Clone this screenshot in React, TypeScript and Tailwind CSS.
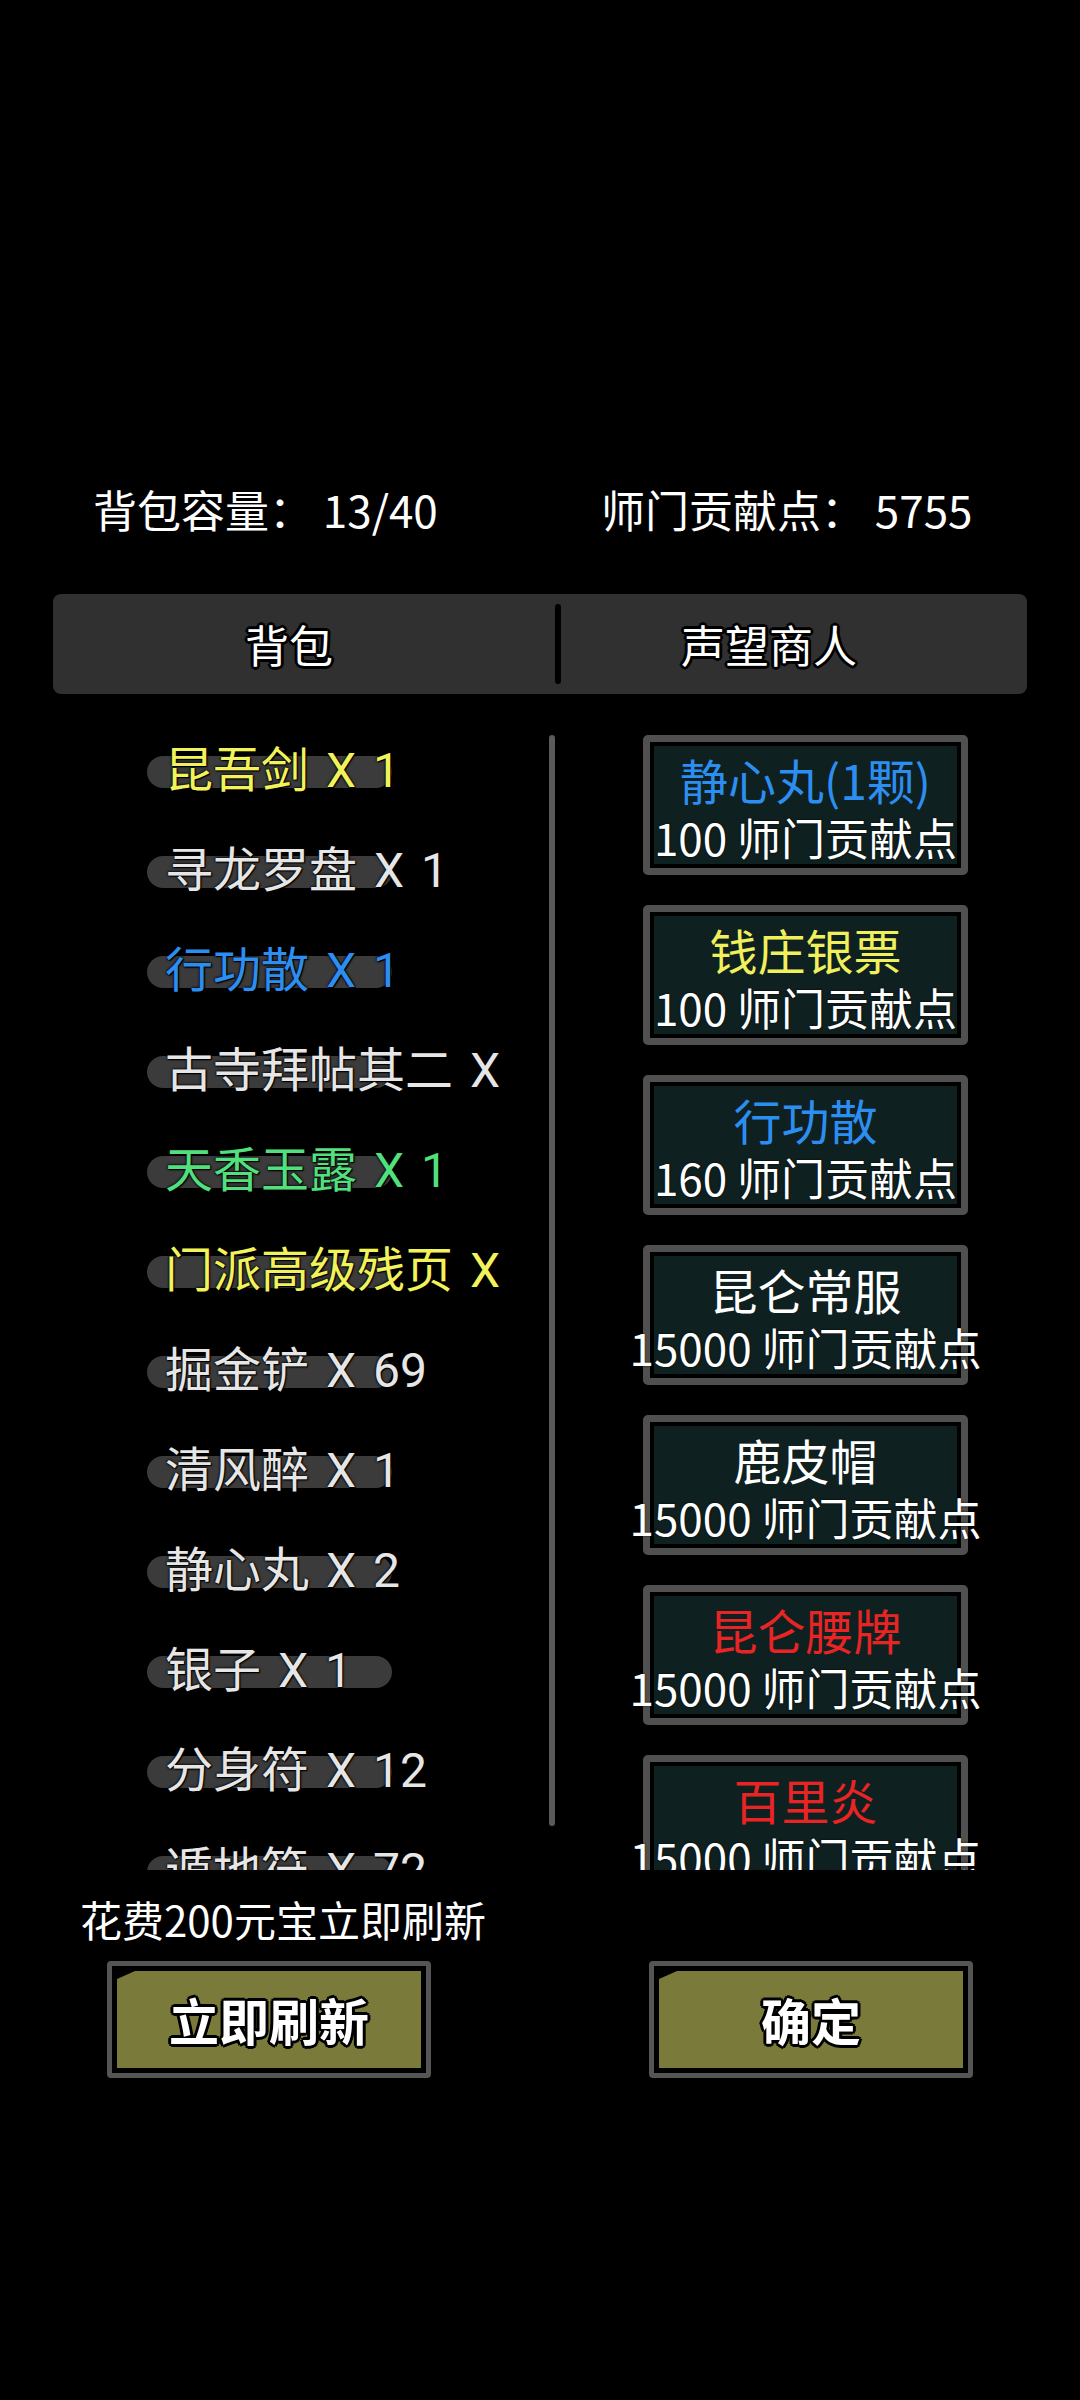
import React from "react";

const FONT = "font-['Noto_Sans_CJK_SC','Noto_Sans',sans-serif]";

const bagItems: { name: string; color: string }[] = [
  { name: "昆吾剑 X 1", color: "text-[#f2f25a]" },
  { name: "寻龙罗盘 X 1", color: "text-[#e6e6e6]" },
  { name: "行功散 X 1", color: "text-[#2d8ef2]" },
  { name: "古寺拜帖其二 X 1", color: "text-[#e6e6e6]" },
  { name: "天香玉露 X 1", color: "text-[#52e07e]" },
  { name: "门派高级残页 X 1", color: "text-[#f2f25a]" },
  { name: "掘金铲 X 69", color: "text-[#e6e6e6]" },
  { name: "清风醉 X 1", color: "text-[#e6e6e6]" },
  { name: "静心丸 X 2", color: "text-[#e6e6e6]" },
  { name: "银子 X 1", color: "text-[#e6e6e6]" },
  { name: "分身符 X 12", color: "text-[#e6e6e6]" },
  { name: "遁地符 X 72", color: "text-[#e6e6e6]" },
];

const shopItems: { name: string; price: number; color: string }[] = [
  { name: "静心丸(1颗)", price: 100, color: "text-[#2d8ef2]" },
  { name: "钱庄银票", price: 100, color: "text-[#f0f05c]" },
  { name: "行功散", price: 160, color: "text-[#2d8ef2]" },
  { name: "昆仑常服", price: 15000, color: "text-white" },
  { name: "鹿皮帽", price: 15000, color: "text-white" },
  { name: "昆仑腰牌", price: 15000, color: "text-[#e82424]" },
  { name: "百里炎", price: 15000, color: "text-[#e82424]" },
];

const outline =
  "[text-shadow:3px_0_0_#000,-3px_0_0_#000,0_3px_0_#000,0_-3px_0_#000,2px_2px_0_#000,-2px_-2px_0_#000,2px_-2px_0_#000,-2px_2px_0_#000]";

const GameButton = ({ label }: { label: string }) => (
  <button
    type="button"
    className="flex h-[117px] w-[324px] rounded-[4px] border-[5px] border-[#555555] bg-black p-[5px]"
  >
    <span
      className={`flex flex-1 items-center justify-center bg-[#7a7a3b] text-[50px] font-bold text-white ${outline} [clip-path:polygon(18px_0,100%_0,100%_100%,0_100%,0_8px)]`}
    >
      {label}
    </span>
  </button>
);

export default function App() {
  return (
    <div className={`flex h-[2400px] w-[1080px] flex-col bg-black ${FONT}`}>
      {/* header stats */}
      <div className="mt-[478px] flex h-[62px] items-center text-[44px] text-white">
        <span className="ml-[93px] w-[508px] whitespace-nowrap">背包容量： 13/40</span>
        <span className="whitespace-nowrap">师门贡献点： 5755</span>
      </div>

      {/* tabs */}
      <div className="mx-[53px] mt-[54px] flex h-[100px] items-center rounded-lg bg-[#303030]">
        <div className={`w-[502px] pr-[30px] text-center text-[44px] text-white ${outline}`}>背包</div>
        <div className="h-[80px] w-[6px] rounded-full bg-black" />
        <div className={`flex-1 pr-[50px] text-center text-[44px] text-white ${outline}`}>声望商人</div>
      </div>

      {/* content */}
      <div className="mt-[17px] flex h-[1159px] overflow-hidden">
        {/* bag list */}
        <div className="flex w-[549px] flex-col pt-[10px]">
          {bagItems.map((it) => (
            <div key={it.name} className="relative flex h-[100px] shrink-0 items-center">
              <div className="absolute left-[147px] top-[35px] h-[32px] w-[245px] rounded-full bg-[#3b3b3b]" />
              <div
                className={`relative ml-[165px] h-[66px] w-[352px] overflow-hidden font-['Roboto','Noto_Sans_CJK_SC',sans-serif] text-[48px] leading-[66px] [word-spacing:5px] ${it.color} [text-shadow:0_0_2px_#000,0_0_3px_#000,1px_1px_1px_#000]`}
              >
                {it.name}
              </div>
            </div>
          ))}
        </div>

        {/* scrollbar */}
        <div className="mt-[24px] h-[1091px] w-[6px] shrink-0 rounded-full bg-[#5a5a5a]" />

        {/* shop cards */}
        <div className="ml-[88px] flex w-[325px] flex-col gap-[30px] pt-[24px]">
          {shopItems.map((it) => (
            <div
              key={it.name}
              className="h-[140px] shrink-0 rounded-[5px] border-[7px] border-[#505050] bg-black p-[4px]"
            >
              <div className="flex h-full flex-col items-center bg-[#0f2020] pt-[4px]">
                <div className={`whitespace-nowrap text-[48px] leading-[58px] ${it.color}`}>{it.name}</div>
                <div className="whitespace-nowrap text-[44px] leading-[58px] text-white [text-shadow:0_0_2px_#000]">
                  {it.price} 师门贡献点
                </div>
              </div>
            </div>
          ))}
        </div>
      </div>

      {/* refresh hint */}
      <div className="ml-[80px] mt-[24px] h-[50px] text-[42px] leading-[50px] text-white">花费200元宝立即刷新</div>

      {/* buttons */}
      <div className="mt-[17px] flex">
        <div className="ml-[107px]">
          <GameButton label="立即刷新" />
        </div>
        <div className="ml-[218px]">
          <GameButton label="确定" />
        </div>
      </div>
    </div>
  );
}
